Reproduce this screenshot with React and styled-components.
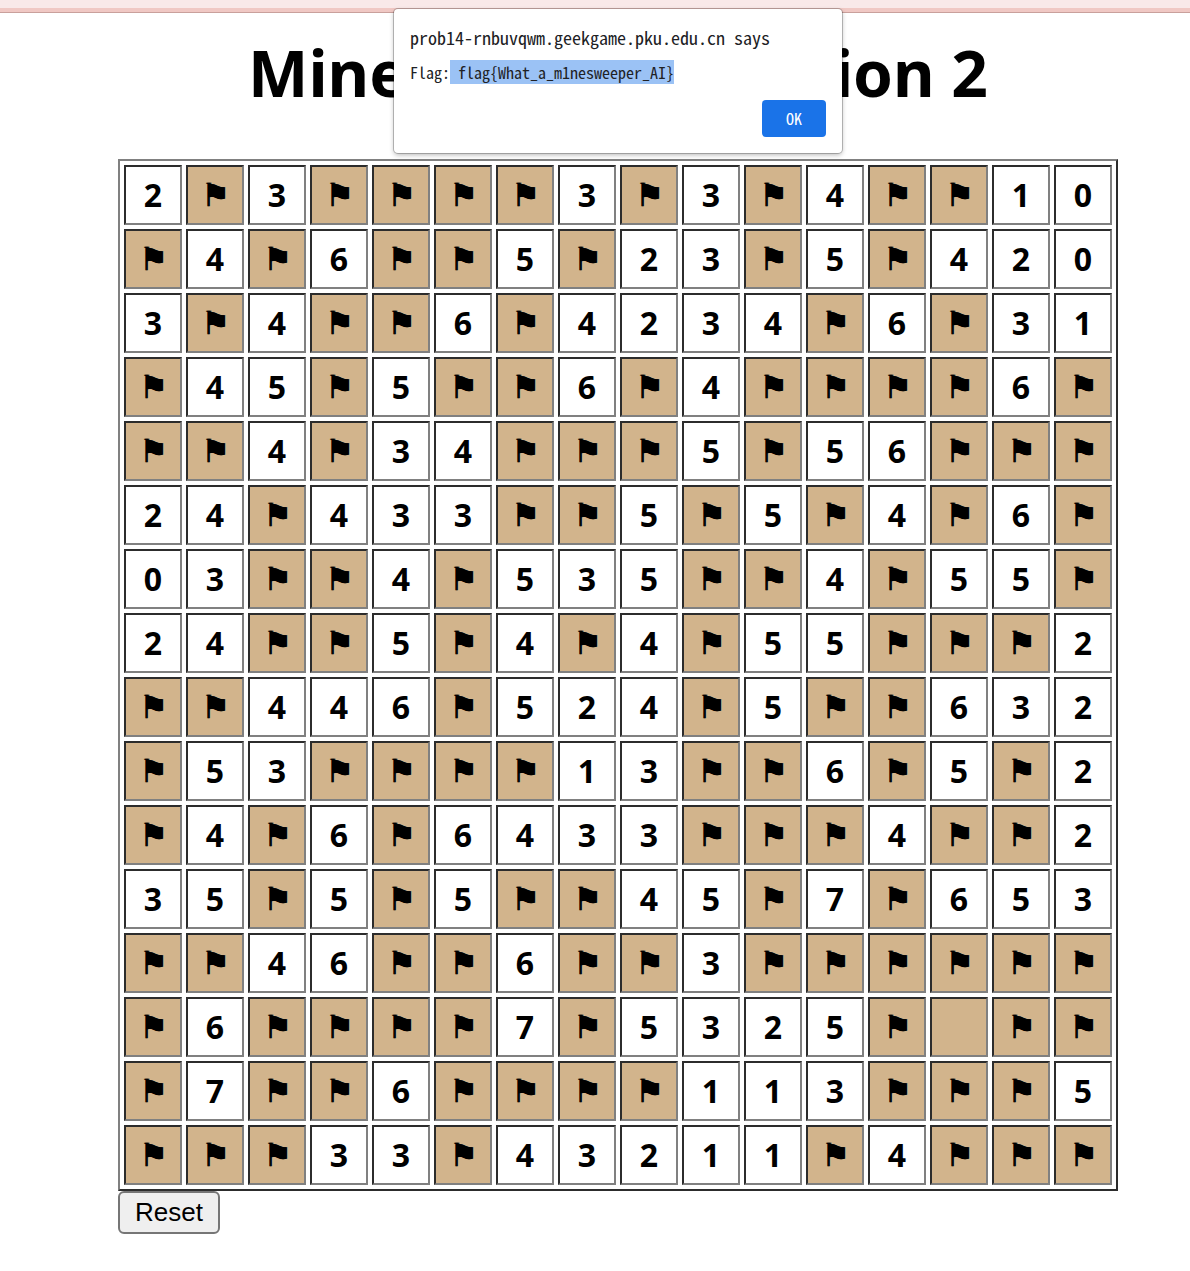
import React from "react";
import styled, { createGlobalStyle } from "styled-components";

const sans = `"Noto Sans", "Open Sans", sans-serif`;
const mono = `"Noto Sans Mono CJK SC", "Noto Sans CJK SC", monospace`;

const GlobalStyle = createGlobalStyle`
  *, *::before, *::after { box-sizing: border-box; }
  body { margin: 0; background: #fff; color: #000; font-family: ${sans}; }
`;

const Page = styled.div`
  display: flex;
  flex-direction: column;
`;

const WarningBar = styled.div`
  height: 13px;
  background: #f0c8c4;
  border-top: 8px solid #f9e9e9;
  border-bottom: 1px solid #c9a09c;
`;

const Content = styled.main`
  position: relative;
  display: flex;
  flex-direction: column;
  align-items: center;
  padding: 16px 0 36px 46px;
`;

const Title = styled.h1`
  margin: 0 0 42px;
  font-size: 64px;
  line-height: 88px;
  font-weight: 700;
  white-space: nowrap;
`;

const Game = styled.section`
  display: flex;
  flex-direction: column;
  align-items: flex-start;
`;

const Board = styled.table`
  border: 2px solid;
  border-color: #808080 #2c2c2c #2c2c2c #808080;
  border-collapse: separate;
  border-spacing: 4px;
`;

const Cell = styled.td`
  width: 58px;
  height: 60px;
  padding: 0;
  border: 2px solid;
  border-color: #2c2c2c #808080 #808080 #2c2c2c;
  background: ${(p) => (p.$covered ? "#d2b48c" : "#fff")};
  font-size: 32px;
  line-height: 44px;
  font-weight: 700;
  text-align: center;
  vertical-align: middle;
`;

const Flag = styled.span`
  display: block;
  padding-bottom: 2px;
  font-family: "Noto Sans", "DejaVu Sans", sans-serif;
  text-shadow: 1px 0 0 #000;
`;

const ResetButton = styled.button`
  padding: 4px 15px;
  border: 2px solid #767676;
  border-radius: 6px;
  background: #efefef;
  color: #000;
  font-family: "Liberation Sans", Arial, sans-serif;
  font-size: 26px;
  line-height: 31px;
`;

const Overlay = styled.div`
  position: absolute;
  top: -4px;
  left: 46px;
  right: 0;
  display: flex;
  justify-content: center;
`;

const AlertBox = styled.dialog`
  position: static;
  display: flex;
  flex-direction: column;
  width: 448px;
  margin: 0;
  padding: 16px;
  border: 0;
  border-radius: 4px;
  background: #fff;
  color: #202124;
  font-family: ${mono};
  box-shadow: 0 0 0 1px rgba(0, 0, 0, 0.22), 0 2px 5px rgba(0, 0, 0, 0.28);
`;

const AlertOrigin = styled.h2`
  margin: 0 0 10px;
  font-size: 18px;
  line-height: 25px;
  font-weight: 400;
`;

const AlertMessage = styled.p`
  margin: 0 0 16px;
  font-size: 16px;
  line-height: 24px;
  white-space: pre;
`;

const Selected = styled.span`
  display: inline-block;
  background: #9bc2f5;
`;

const OkButton = styled.button`
  align-self: flex-end;
  width: 64px;
  height: 37px;
  padding: 0 0 2px;
  border: 0;
  border-radius: 4px;
  background: #1a73e8;
  color: #fff;
  font-family: ${mono};
  font-size: 16px;
`;

// F = flagged cell, "." = covered cell, digit = neighbouring mines
const rows = [
  "2F3FFFF3F3F4FF10",
  "F4F6FF5F23F5F420",
  "3F4FF6F4234F6F31",
  "F45F5FF6F4FFFF6F",
  "FF4F34FFF5F56FFF",
  "24F433FF5F5F4F6F",
  "03FF4F535FF4F55F",
  "24FF5F4F4F55FFF2",
  "FF446F524F5FF632",
  "F53FFFF13FF6F5F2",
  "F4F6F6433FFF4FF2",
  "35F5F5FF45F7F653",
  "FF46FF6FF3FFFFFF",
  "F6FFFF7F5325F.FF",
  "F7FF6FFFF113FFF5",
  "FFF33F43211F4FFF",
];

function CellContent({ value }) {
  if (value === "F") return <Flag>⚑</Flag>;
  return value === "." ? null : value;
}

export default function App() {
  return (
    <Page>
      <GlobalStyle />
      <WarningBar />
      <Content>
        <Title>Minesweeper Version 2</Title>
        <Game>
          <Board>
            <tbody>
              {rows.map((row, y) => (
                <tr key={y}>
                  {[...row].map((c, x) => (
                    <Cell key={x} $covered={c === "F" || c === "."}>
                      <CellContent value={c} />
                    </Cell>
                  ))}
                </tr>
              ))}
            </tbody>
          </Board>
          <ResetButton type="button">Reset</ResetButton>
        </Game>
        <Overlay>
          <AlertBox open aria-labelledby="alert-origin">
            <AlertOrigin id="alert-origin">
              prob14-rnbuvqwm.geekgame.pku.edu.cn says
            </AlertOrigin>
            <AlertMessage>
              Flag:<Selected>{" flag{What_a_m1nesweeper_AI}"}</Selected>
            </AlertMessage>
            <OkButton type="button">OK</OkButton>
          </AlertBox>
        </Overlay>
      </Content>
    </Page>
  );
}
